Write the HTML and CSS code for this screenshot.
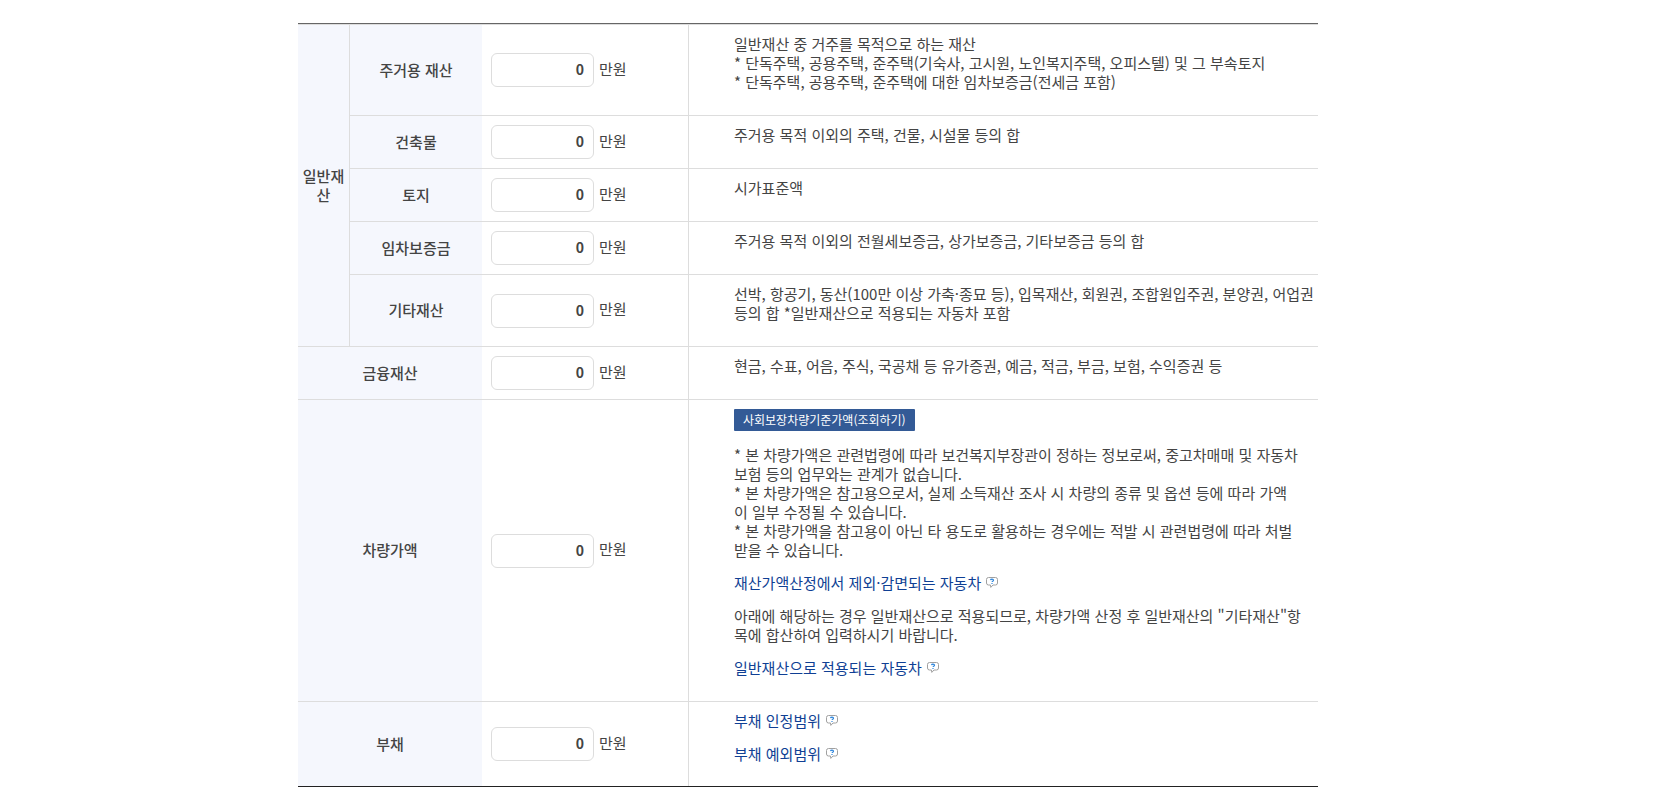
FILE: index.html
```html
<!DOCTYPE html>
<html lang="ko">
<head>
  <meta charset="UTF-8">
  <meta name="viewport" content="width=device-width, initial-scale=1.0">
  <title>재산</title>
  <link rel="stylesheet" href="styles.css">
</head>
<body>
  <svg class="sprite" width="0" height="0" aria-hidden="true">
    <symbol id="ico-help" viewBox="0 0 12 11">
      <path d="M2.5 .5h7a2 2 0 0 1 2 2v3.5a2 2 0 0 1-2 2H7L4.800 10.400 4.500 8H2.500a2 2 0 0 1-2-2V2.500a2 2 0 0 1 2-2z" fill="#fff" stroke="#a0a0a0"/>
      <path d="M4.500 3.100c.2-1.200 3-1.300 3 .1 0 1-1.500.9-1.500 1.900M6 6v1" fill="none" stroke="#2f86dc" stroke-width="1.200"/>
    </symbol>
  </svg>

  <div class="container">
    <table class="tbl">
      <colgroup>
        <col class="col-group">
        <col class="col-name">
        <col class="col-amount">
        <col>
      </colgroup>
      <tbody>
        <tr>
          <th class="group" rowspan="5" scope="rowgroup">일반재산</th>
          <th scope="row"><label for="house">주거용 재산</label></th>
          <td class="amount"><div class="field"><input type="text" id="house" value="0"><span>만원</span></div></td>
          <td class="desc">
            <p>일반재산 중 거주를 목적으로 하는 재산<br>
            * 단독주택, 공용주택, 준주택(기숙사, 고시원, 노인복지주택, 오피스텔) 및 그 부속토지<br>
            * 단독주택, 공용주택, 준주택에 대한 임차보증금(전세금 포함)</p>
          </td>
        </tr>
        <tr>
          <th scope="row"><label for="building">건축물</label></th>
          <td class="amount"><div class="field"><input type="text" id="building" value="0"><span>만원</span></div></td>
          <td class="desc"><p>주거용 목적 이외의 주택, 건물, 시설물 등의 합</p></td>
        </tr>
        <tr>
          <th scope="row"><label for="land">토지</label></th>
          <td class="amount"><div class="field"><input type="text" id="land" value="0"><span>만원</span></div></td>
          <td class="desc"><p>시가표준액</p></td>
        </tr>
        <tr>
          <th scope="row"><label for="deposit">임차보증금</label></th>
          <td class="amount"><div class="field"><input type="text" id="deposit" value="0"><span>만원</span></div></td>
          <td class="desc"><p>주거용 목적 이외의 전월세보증금, 상가보증금, 기타보증금 등의 합</p></td>
        </tr>
        <tr>
          <th scope="row"><label for="etc">기타재산</label></th>
          <td class="amount"><div class="field"><input type="text" id="etc" value="0"><span>만원</span></div></td>
          <td class="desc">
            <p>선박, 항공기, 동산(100만 이상 가축·종묘 등), 입목재산, 회원권, 조합원입주권, 분양권, 어업권<br>
            등의 합 *일반재산으로 적용되는 자동차 포함</p>
          </td>
        </tr>
        <tr>
          <th colspan="2" scope="row"><label for="finance">금융재산</label></th>
          <td class="amount"><div class="field"><input type="text" id="finance" value="0"><span>만원</span></div></td>
          <td class="desc"><p>현금, 수표, 어음, 주식, 국공채 등 유가증권, 예금, 적금, 부금, 보험, 수익증권 등</p></td>
        </tr>
        <tr>
          <th colspan="2" scope="row"><label for="car">차량가액</label></th>
          <td class="amount"><div class="field"><input type="text" id="car" value="0"><span>만원</span></div></td>
          <td class="desc">
            <button type="button" class="btn">사회보장차량기준가액(조회하기)</button>
            <p>* 본 차량가액은 관련법령에 따라 보건복지부장관이 정하는 정보로써, 중고차매매 및 자동차<br>보험 등의 업무와는 관계가 없습니다.<br>
            * 본 차량가액은 참고용으로서, 실제 소득재산 조사 시 차량의 종류 및 옵션 등에 따라 가액<br>이 일부 수정될 수 있습니다.<br>
            * 본 차량가액을 참고용이 아닌 타 용도로 활용하는 경우에는 적발 시 관련법령에 따라 처벌<br>받을 수 있습니다.</p>
            <p><a href="#">재산가액산정에서 제외·감면되는 자동차<svg class="ico"><use href="#ico-help"/></svg></a></p>
            <p>아래에 해당하는 경우 일반재산으로 적용되므로, 차량가액 산정 후 일반재산의 "기타재산"항<br>목에 합산하여 입력하시기 바랍니다.</p>
            <p><a href="#">일반재산으로 적용되는 자동차<svg class="ico"><use href="#ico-help"/></svg></a></p>
          </td>
        </tr>
        <tr>
          <th colspan="2" scope="row"><label for="debt">부채</label></th>
          <td class="amount"><div class="field"><input type="text" id="debt" value="0"><span>만원</span></div></td>
          <td class="desc">
            <p><a href="#">부채 인정범위<svg class="ico"><use href="#ico-help"/></svg></a></p>
            <p><a href="#">부채 예외범위<svg class="ico"><use href="#ico-help"/></svg></a></p>
          </td>
        </tr>
      </tbody>
    </table>
  </div>
</body>
</html>
```
FILE: styles.css
```css
body {
  margin: 0;
  padding: 23px 49px 0 0;
  background: #fff;
  color: #444;
  font-family: "Noto Sans CJK KR", sans-serif;
  font-size: 15px;
  line-height: 19px;
}

.sprite {
  position: absolute;
}

.container {
  max-width: 1020px;
  margin: 0 auto;
}

.tbl {
  width: 100%;
  table-layout: fixed;
  border-collapse: separate;
  border-spacing: 0;
  border-top: 1px solid #666;
  border-bottom: 1px solid #222;
}

.col-group {
  width: 52px;
}

.col-name {
  width: 132px;
}

.col-amount {
  width: 207px;
}

.tbl th,
.tbl td {
  padding: 0;
  border-bottom: 1px solid #ddd;
}

.tbl tr:first-child > * {
  border-top: 1px solid #ddd;
}

.tbl tr:last-child > * {
  border-bottom: 0;
}

.tbl th {
  padding-bottom: 2px;
  background: #f5f7fd;
  font-weight: 500;
  text-align: center;
}

.tbl .group {
  padding: 0 4px 2px;
  border-right: 1px solid #ddd;
}

.tbl .amount {
  padding: 0 9px;
  border-right: 1px solid #ddd;
}

.field {
  display: flex;
  align-items: center;
  gap: 5px;
}

.field span {
  padding-bottom: 4px;
}

.field input {
  box-sizing: border-box;
  width: 103px;
  height: 34px;
  padding: 0 9px 2px;
  border: 1px solid #ddd;
  border-radius: 6px;
  background: #fff;
  color: #444;
  font-family: inherit;
  font-size: 14px;
  font-weight: 700;
  text-align: right;
}

.tbl .desc {
  padding: 9px 0 10px 45px;
  vertical-align: top;
}

.tbl tr:last-child .desc {
  padding-bottom: 9px;
}

.desc p {
  margin: 0 0 14px;
}

.desc a {
  color: #0f3f94;
  text-decoration: none;
}

.ico {
  width: 12px;
  height: 11px;
  margin-left: 5px;
  vertical-align: 1px;
}

.btn {
  display: block;
  height: 22px;
  margin: 0 0 14px;
  padding: 0 9px;
  border: 0;
  border-radius: 1px;
  background: #335a96;
  color: #fff;
  font-family: inherit;
  font-size: 12px;
  line-height: 22px;
  cursor: pointer;
}
```
